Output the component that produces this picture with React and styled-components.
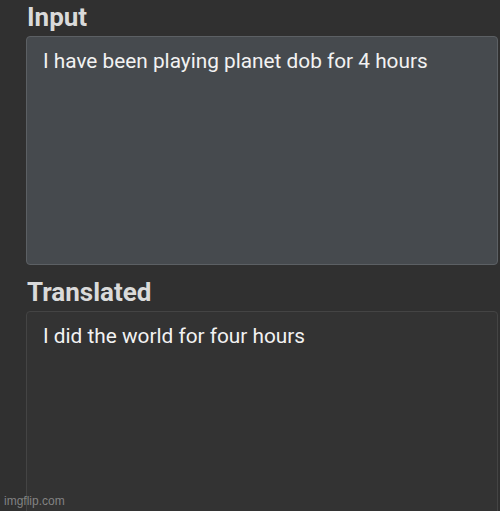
import React from 'react';
import styled, { createGlobalStyle } from 'styled-components';

const GlobalStyle = createGlobalStyle`
  html, body {
    margin: 0;
    padding: 0;
    background: #303030;
    overflow: hidden;
  }
`;

const App = () => (
  <Page>
    <GlobalStyle />
    <Section>
      <Heading>Input</Heading>
      <Box $variant="input" $height={229}>
        I have been playing planet dob for 4 hours
      </Box>
    </Section>
    <Section>
      <Heading>Translated</Heading>
      <Box $variant="output" $height={230}>
        I did the world for four hours
      </Box>
    </Section>
    <Watermark>imgflip.com</Watermark>
  </Page>
);

export default App;

const Page = styled.div`
  position: relative;
  width: 500px;
  height: 511px;
  box-sizing: border-box;
  padding: 2px 2px 0 26px;
  background: #303030;
  font-family: Roboto, "Liberation Sans", sans-serif;
  display: flex;
  flex-direction: column;
  gap: 12px;
  overflow: hidden;
`;

const Section = styled.section`
  display: flex;
  flex-direction: column;
  gap: 4px;
`;

const Heading = styled.h2`
  margin: 0 0 0 1px;
  font-size: 26px;
  font-weight: 700;
  line-height: 30px;
  color: #dadada;
`;

const Box = styled.div`
  box-sizing: border-box;
  height: ${(p) => p.$height}px;
  padding: 10px 16px;
  border-radius: 4px;
  font-size: 20.8px;
  line-height: 28px;
  color: #f2f2f2;
  background: ${(p) => (p.$variant === 'input' ? '#464a4e' : '#333333')};
  border: 1px solid ${(p) => (p.$variant === 'input' ? '#5c6064' : '#444444')};
`;

const Watermark = styled.span`
  position: absolute;
  left: 4px;
  bottom: 3px;
  font-family: "Liberation Sans", Arial, sans-serif;
  font-size: 12px;
  color: rgba(200, 200, 200, 0.55);
`;
